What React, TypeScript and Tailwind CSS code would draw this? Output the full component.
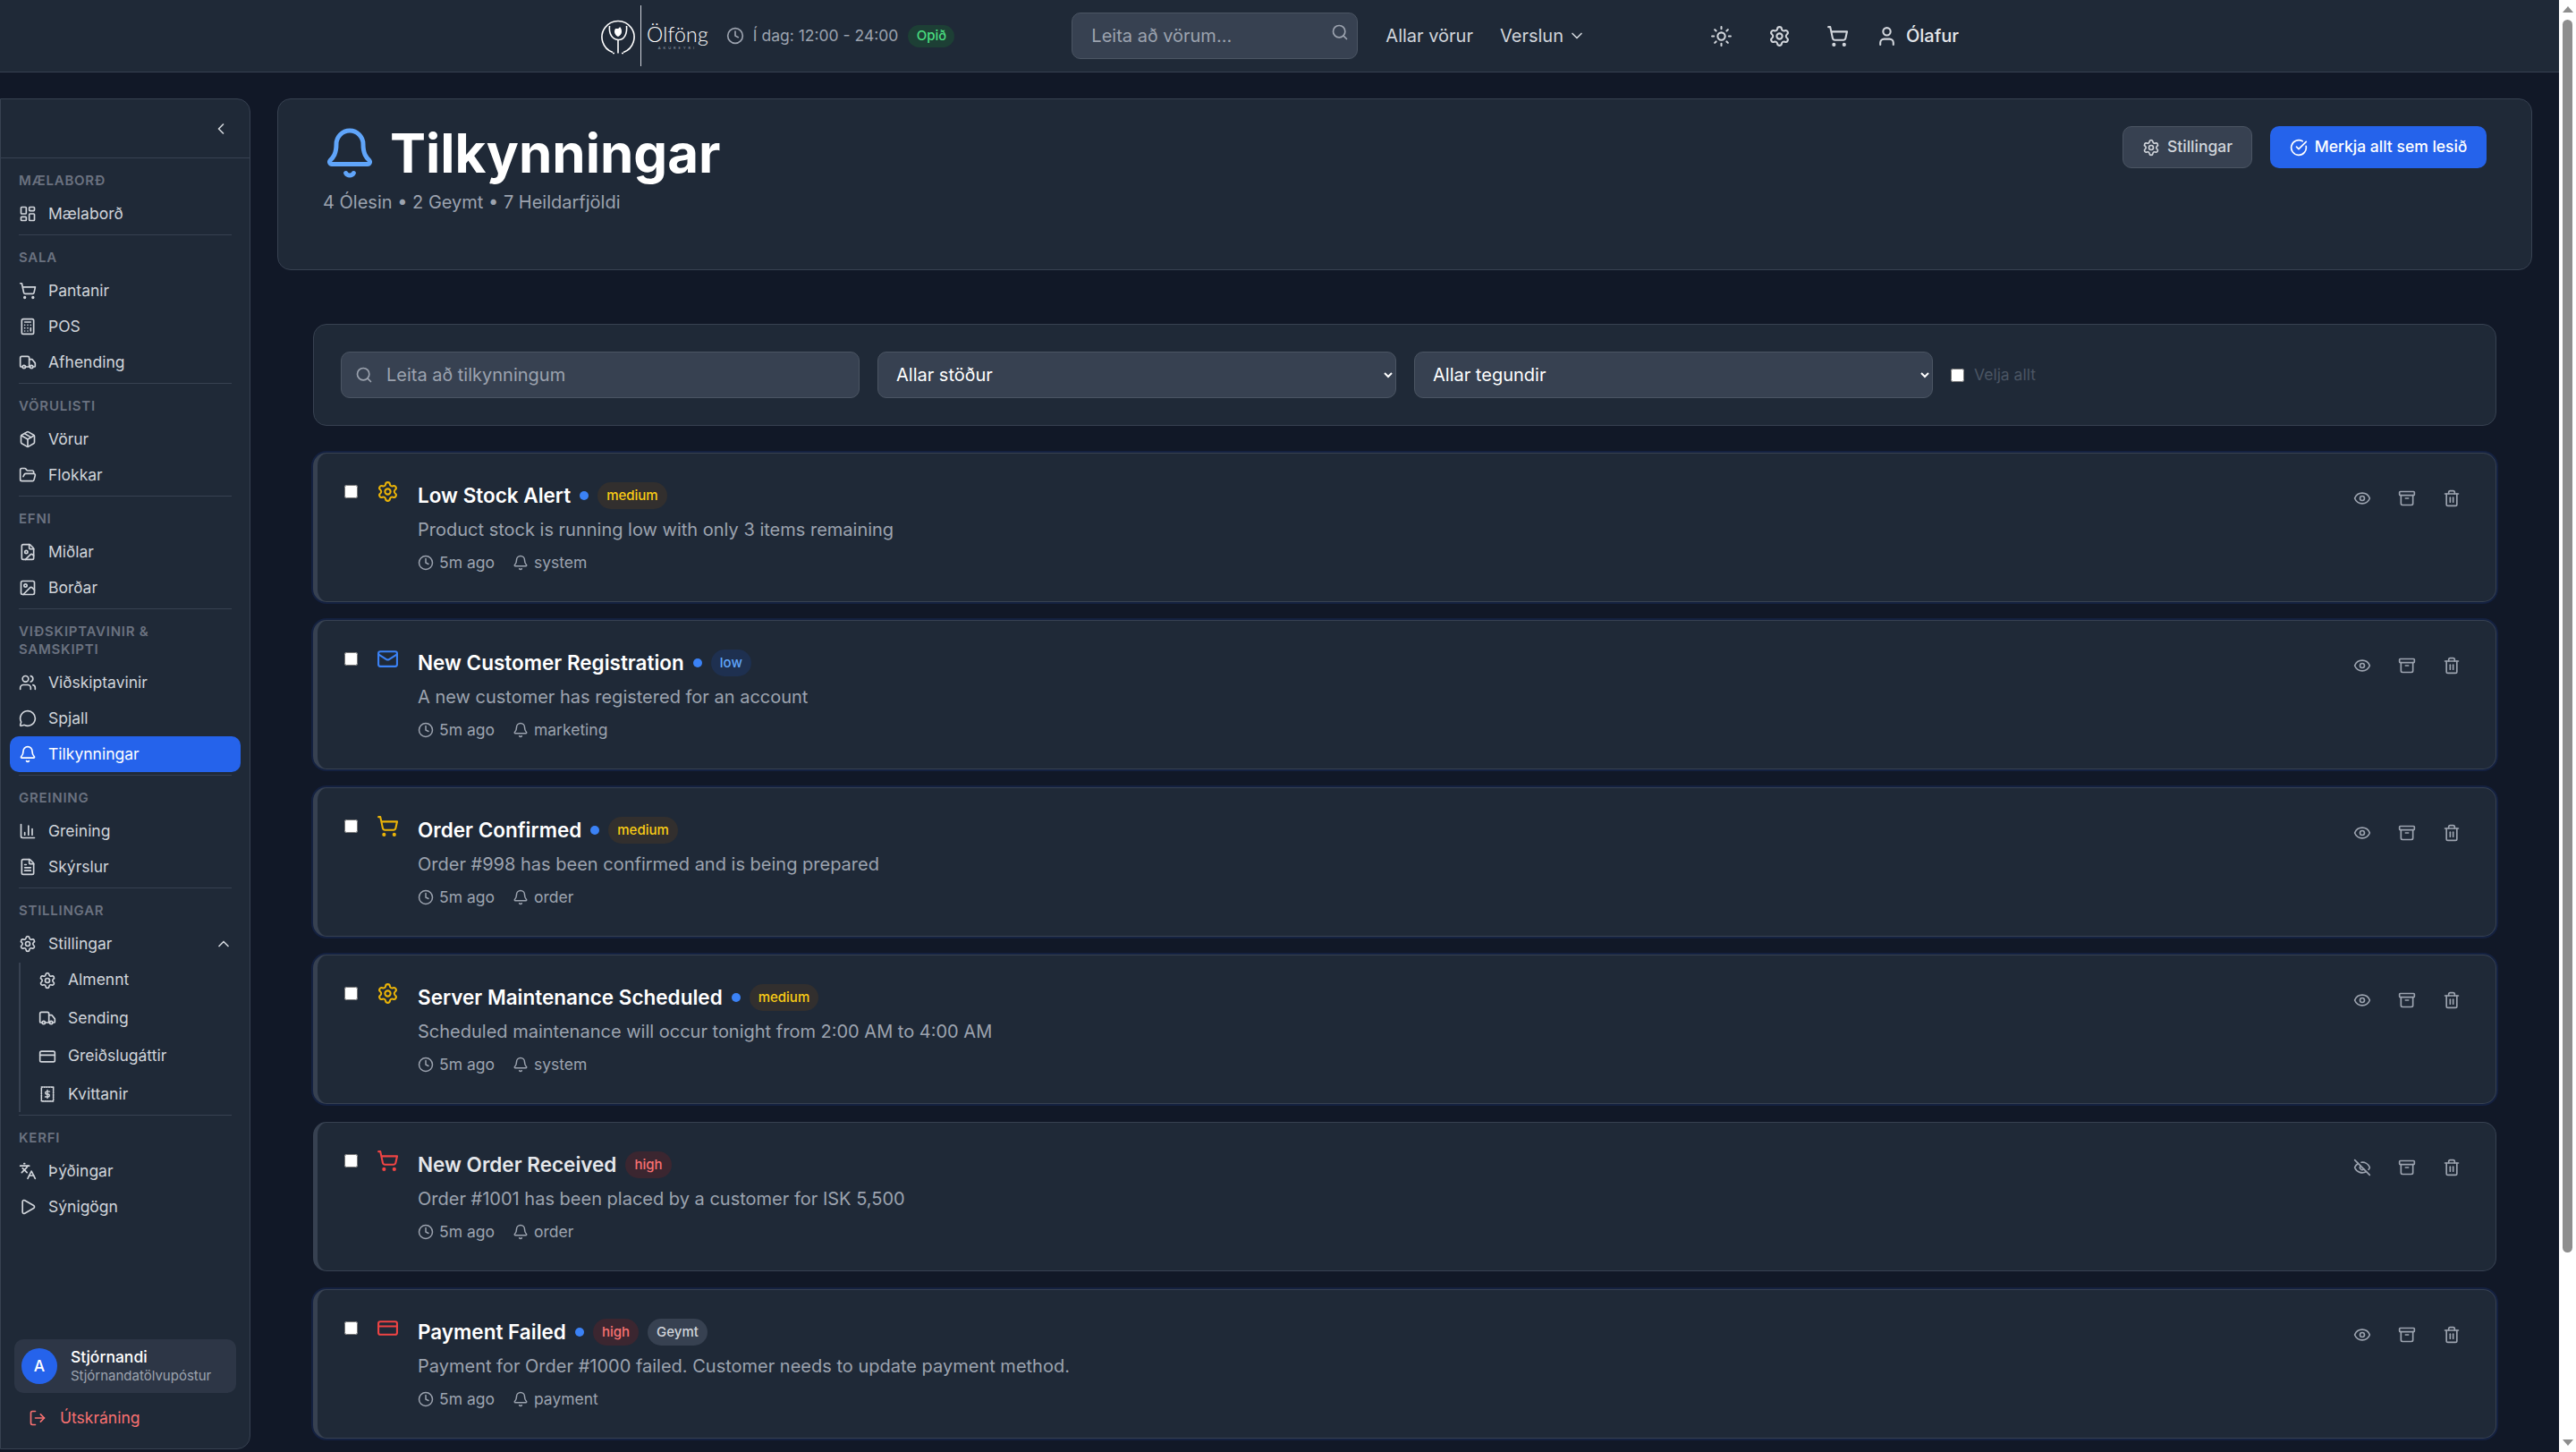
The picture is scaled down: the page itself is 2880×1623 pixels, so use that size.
import {
  Archive, Bell, Calculator, ChartColumn, ChevronDown, ChevronLeft, ChevronUp, CircleCheckBig, Clock, CreditCard,
  Eye, EyeOff, FileImage, FileText, FolderOpen, Image, Languages, LayoutDashboard, LogOut, Mail, MessageCircle,
  Package, Play, Search, Settings, ShoppingCart, Sun, Trash2, Truck, User, Users,
} from 'lucide-react';
import type { ComponentType, ReactNode } from 'react';

type IconType = ComponentType<{ className?: string; size?: number }>;

function ReceiptIcon({ className }: { className?: string }) {
  return (
    <svg viewBox="0 0 24 24" fill="none" stroke="currentColor" strokeWidth="2" strokeLinecap="round" className={className}>
      <rect x="4" y="2.5" width="16" height="19" strokeDasharray="1.6 1.6" />
      <path d="M12 6.5v11M15 8.5h-4a1.7 1.7 0 0 0 0 3.5h2a1.7 1.7 0 0 1 0 3.5H9" strokeWidth="1.7" />
    </svg>
  );
}

function Logo() {
  return (
    <div className="flex items-center">
      <svg viewBox="0 0 40 52" className="w-[40px] h-[52px] text-white" fill="none" stroke="currentColor">
        <path d="M14 44.5A18 18 0 1 1 26 44.5" strokeWidth="1.6" />
        <path d="M10.5 15c-1 9 3 15 9.500 15.500s10.500-6.500 9.500-15.500" strokeWidth="1.6" />
        <path d="M20 30.500v15M14 45.500h2M24 45.500h2" strokeWidth="1.6" />
        <path d="M20 27c-4-2-5-6-3-9 2 0 4 .5 5-2 3 3 3 9-2 11z" fill="currentColor" stroke="none" />
      </svg>
      <div className="w-px h-[68px] bg-[#d1d5db] ml-[5px] mr-[6px]" />
      <div className="flex flex-col items-center">
        <span className="font-['Lato'] font-light text-[23px] leading-[26px] text-white tracking-[0.2px]">Ölföng</span>
        <span className="font-['Lato'] text-[4px] leading-[5px] tracking-[3px] text-[#9ca3af]">AKUREYRI</span>
      </div>
    </div>
  );
}

function TopBar() {
  return (
    <header className="h-[81px] shrink-0 bg-[#1f2937] border-b border-[#374151] flex items-center pl-[671px]">
      <Logo />
      <Clock className="w-[20px] h-[20px] text-[#9ca3af] ml-[20px]" />
      <span className="ml-[10px] text-[17.5px] text-[#9ca3af] whitespace-nowrap">Í dag: 12:00 - 24:00</span>
      <span className="ml-[11px] h-[25px] w-[52px] rounded-full bg-[#1d3f35] text-[#4ade80] text-[15px] font-medium flex items-center justify-center">Opið</span>
      <div className="relative ml-[131px] w-[320px] h-[52px] shrink-0">
        <input
          placeholder="Leita að vörum..."
          className="w-full h-full rounded-[10px] bg-[#374151] border border-[#4b5563] pl-[21px] text-[20px] text-white placeholder:text-[#9ca3af] outline-none"
        />
        <Search className="absolute right-[10px] top-[12px] w-[20px] h-[20px] text-[#9ca3af]" />
      </div>
      <span className="ml-[31px] text-[20px] text-[#d1d5db] whitespace-nowrap">Allar vörur</span>
      <span className="ml-[30px] text-[20px] text-[#d1d5db]">Verslun</span>
      <ChevronDown className="ml-[5px] w-[20px] h-[20px] text-[#d1d5db]" />
      <Sun className="ml-[139px] w-[25px] h-[25px] text-[#d1d5db]" />
      <Settings className="ml-[40px] w-[25px] h-[25px] text-[#d1d5db]" />
      <ShoppingCart className="ml-[40px] w-[25px] h-[25px] text-[#d1d5db]" />
      <User className="ml-[30px] w-[25px] h-[25px] text-[#d1d5db]" />
      <span className="ml-[9px] text-[20px] font-medium text-[#e5e7eb]">Ólafur</span>
    </header>
  );
}

const navSections: { label: ReactNode; items: { name: string; icon: IconType; active?: boolean }[] }[] = [
  { label: 'Mælaborð', items: [{ name: 'Mælaborð', icon: LayoutDashboard }] },
  { label: 'Sala', items: [{ name: 'Pantanir', icon: ShoppingCart }, { name: 'POS', icon: Calculator }, { name: 'Afhending', icon: Truck }] },
  { label: 'Vörulisti', items: [{ name: 'Vörur', icon: Package }, { name: 'Flokkar', icon: FolderOpen }] },
  { label: 'Efni', items: [{ name: 'Miðlar', icon: FileImage }, { name: 'Borðar', icon: Image }] },
  {
    label: 'Viðskiptavinir & samskipti',
    items: [{ name: 'Viðskiptavinir', icon: Users }, { name: 'Spjall', icon: MessageCircle }, { name: 'Tilkynningar', icon: Bell, active: true }],
  },
  { label: 'Greining', items: [{ name: 'Greining', icon: ChartColumn }, { name: 'Skýrslur', icon: FileText }] },
];

const settingsChildren: { name: string; icon: IconType }[] = [
  { name: 'Almennt', icon: Settings },
  { name: 'Sending', icon: Truck },
  { name: 'Greiðslugáttir', icon: CreditCard },
  { name: 'Kvittanir', icon: ReceiptIcon },
];

function SectionLabel({ children }: { children: ReactNode }) {
  return <div className="px-[10px] mb-[7px] text-[15px] leading-[20px] font-semibold uppercase tracking-[0.75px] text-[#6b7280]">{children}</div>;
}

function NavItem({ name, icon: Icon, active }: { name: string; icon: IconType; active?: boolean }) {
  return (
    <div className={`h-[40px] flex items-center gap-[13px] px-[10px] rounded-[10px] text-[17.5px] ${active ? 'bg-[#2563eb] text-white' : 'text-[#d1d5db]'}`}>
      <Icon className="w-[20px] h-[20px] shrink-0" />
      <span>{name}</span>
    </div>
  );
}

function Sidebar() {
  return (
    <aside className="w-[280px] h-[1510px] shrink-0 mt-[29px] bg-[#1f2937] border border-[#374151] rounded-r-[15px] flex flex-col">
      <div className="h-[66px] shrink-0 border-b border-[#374151] flex items-center justify-end pr-[22px]">
        <ChevronLeft className="w-[20px] h-[20px] text-[#d1d5db]" />
      </div>
      <nav className="flex-1 px-[10px] pt-[15px]">
        {navSections.map((section, i) => (
          <div key={i} className="mb-[15px]">
            <SectionLabel>{section.label}</SectionLabel>
            {section.items.map((item) => (
              <NavItem key={item.name} {...item} />
            ))}
            <div className="mx-[10px] mt-[3px] border-b border-[#374151]" />
          </div>
        ))}
        <div className="mb-[15px]">
          <SectionLabel>Stillingar</SectionLabel>
          <div className="h-[40px] flex items-center gap-[13px] pl-[10px] pr-[9px] text-[17.5px] text-[#d1d5db]">
            <Settings className="w-[20px] h-[20px] shrink-0" />
            <span className="flex-1">Stillingar</span>
            <ChevronUp className="w-[20px] h-[20px]" />
          </div>
          <div className="ml-[10px] mt-px pl-[20px] border-l-2 border-[#374151] h-[167px] flex flex-col gap-[5.5px] pt-[1px]">
            {settingsChildren.map(({ name, icon: Icon }) => (
              <div key={name} className="h-[37px] flex items-center gap-[13px] text-[17.5px] text-[#d1d5db]">
                <Icon className="w-[20px] h-[20px] shrink-0" />
                <span>{name}</span>
              </div>
            ))}
          </div>
          <div className="mx-[10px] mt-[3px] border-b border-[#374151]" />
        </div>
        <div>
          <SectionLabel>Kerfi</SectionLabel>
          <NavItem name="Þýðingar" icon={Languages} />
          <NavItem name="Sýnigögn" icon={Play} />
        </div>
      </nav>
      <div className="mx-[15px] h-[60px] rounded-[10px] bg-[#2d3646] flex items-center pl-[8px] gap-[15px]">
        <div className="w-[40px] h-[40px] rounded-full bg-[#2563eb] flex items-center justify-center text-white text-[17.5px] font-medium">A</div>
        <div>
          <div className="text-[17.5px] leading-[22px] font-medium text-white">Stjórnandi</div>
          <div className="text-[15px] leading-[20px] text-[#9ca3af]">Stjórnandatölvupóstur</div>
        </div>
      </div>
      <div className="mt-[8px] mb-[14px] h-[40px] pl-[31px] flex items-center gap-[15px] text-[17.5px] text-[#f87171]">
        <LogOut className="w-[20px] h-[20px]" />
        <span>Útskráning</span>
      </div>
    </aside>
  );
}

function PageHead() {
  return (
    <div className="h-[192px] shrink-0 bg-[#1f2937] border border-[#374151] rounded-[15px] pl-[50px] pr-[50px] pt-[30px] flex justify-between">
      <div>
        <div className="flex items-center gap-[15px] h-[60px]">
          <Bell className="w-[60px] h-[60px] text-[#60a5fa]" />
          <h1 className="text-[60px] leading-[60px] font-bold text-white">Tilkynningar</h1>
        </div>
        <p className="mt-[10px] text-[20px] leading-[30px] text-[#9ca3af]">4 Ólesin • 2 Geymt • 7 Heildarfjöldi</p>
      </div>
      <div className="flex gap-[20px] h-[47px]">
        <button className="w-[145px] rounded-[10px] bg-[#374151] border border-[#4b5563] text-[#d1d5db] text-[17.5px] font-medium flex items-center justify-center gap-[8px]">
          <Settings className="w-[20px] h-[20px]" />
          Stillingar
        </button>
        <button className="w-[242px] rounded-[10px] bg-[#2563eb] text-white text-[17.5px] font-medium flex items-center justify-center gap-[8px]">
          <CircleCheckBig className="w-[20px] h-[20px]" />
          Merkja allt sem lesið
        </button>
      </div>
    </div>
  );
}

function Filters() {
  const selectClass = 'w-[580px] h-[52px] rounded-[10px] bg-[#374151] border border-[#4b5563] px-[16px] text-[20px] text-white outline-none';
  return (
    <div className="h-[114px] shrink-0 bg-[#1f2937] border border-[#374151] rounded-[15px] px-[30px] flex items-center gap-[20px]">
      <div className="relative w-[580px] h-[52px]">
        <Search className="absolute left-[16px] top-[16px] w-[20px] h-[20px] text-[#9ca3af]" />
        <input
          placeholder="Leita að tilkynningum"
          className="w-full h-full rounded-[10px] bg-[#374151] border border-[#4b5563] pl-[50px] text-[20px] text-white placeholder:text-[#9ca3af] outline-none"
        />
      </div>
      <select className={selectClass} defaultValue="all">
        <option value="all">Allar stöður</option>
      </select>
      <select className={selectClass} defaultValue="all">
        <option value="all">Allar tegundir</option>
      </select>
      <label className="flex items-center gap-[11px] text-[17.5px] text-[#4b5563]">
        <input type="checkbox" className="w-[15px] h-[15px]" />
        Velja allt
      </label>
    </div>
  );
}

type Priority = 'low' | 'medium' | 'high';

const priorityBadge: Record<Priority, string> = {
  low: 'bg-[#1e3050] text-[#60a5fa]',
  medium: 'bg-[#322f2e] text-[#facc15]',
  high: 'bg-[#3b2630] text-[#f87171]',
};

const priorityIcon: Record<Priority, string> = {
  low: 'text-[#3b82f6]',
  medium: 'text-[#eab308]',
  high: 'text-[#ef4444]',
};

const notifications: {
  title: string; body: string; type: string; priority: Priority; icon: IconType; unread: boolean; archived?: boolean;
}[] = [
  { title: 'Low Stock Alert', body: 'Product stock is running low with only 3 items remaining', type: 'system', priority: 'medium', icon: Settings, unread: true },
  { title: 'New Customer Registration', body: 'A new customer has registered for an account', type: 'marketing', priority: 'low', icon: Mail, unread: true },
  { title: 'Order Confirmed', body: 'Order #998 has been confirmed and is being prepared', type: 'order', priority: 'medium', icon: ShoppingCart, unread: true },
  { title: 'Server Maintenance Scheduled', body: 'Scheduled maintenance will occur tonight from 2:00 AM to 4:00 AM', type: 'system', priority: 'medium', icon: Settings, unread: true },
  { title: 'New Order Received', body: 'Order #1001 has been placed by a customer for ISK 5,500', type: 'order', priority: 'high', icon: ShoppingCart, unread: false },
  { title: 'Payment Failed', body: 'Payment for Order #1000 failed. Customer needs to update payment method.', type: 'payment', priority: 'high', icon: CreditCard, unread: true, archived: true },
];

function NotificationCard({ n }: { n: (typeof notifications)[number] }) {
  const Icon = n.icon;
  const SeenIcon = n.unread ? Eye : EyeOff;
  return (
    <div className={`h-[167px] shrink-0 bg-[#1f2937] border border-[#374151] border-l-[5px] rounded-[15px] pl-[30px] pr-[29px] pt-[30px] flex ${n.unread ? 'shadow-[0_0_0_2px_rgba(30,58,138,0.25)]' : ''}`}>
      <input type="checkbox" className="w-[15px] h-[15px] mt-[5px] mr-[21px] shrink-0" />
      <Icon className={`w-[25px] h-[25px] shrink-0 mr-[21px] ${priorityIcon[n.priority]}`} />
      <div className="flex-1">
        <div className="flex items-center h-[30px] mt-[2px]">
          <h3 className={`text-[22.5px] font-semibold ${n.unread ? 'text-white' : 'text-[#e5e7eb]'}`}>{n.title}</h3>
          {n.unread && <span className="ml-[10px] w-[10px] h-[10px] rounded-full bg-[#3b82f6]" />}
          <span className={`ml-[10px] h-[30px] px-[10px] rounded-full text-[15px] font-medium flex items-center ${priorityBadge[n.priority]}`}>{n.priority}</span>
          {n.archived && <span className="ml-[10px] h-[30px] px-[10px] rounded-full bg-[#374151] text-[#d1d5db] text-[15px] font-medium flex items-center">Geymt</span>}
        </div>
        <p className="mt-[8px] text-[20px] leading-[30px] text-[#9ca3af]">{n.body}</p>
        <div className="mt-[9px] flex items-center text-[17.5px] leading-[25px] text-[#9ca3af]">
          <Clock className="w-[18px] h-[18px] mr-[6px]" />
          <span>5m ago</span>
          <Bell className="w-[18px] h-[18px] ml-[20px] mr-[6px]" />
          <span>{n.type}</span>
        </div>
      </div>
      <div className="flex gap-[10px] h-[40px] text-[#9ca3af]">
        {[SeenIcon, Archive, Trash2].map((ActionIcon, i) => (
          <button key={i} className="w-[40px] h-[40px] flex items-center justify-center">
            <ActionIcon className="w-[20px] h-[20px]" />
          </button>
        ))}
      </div>
    </div>
  );
}

function FakeScrollbar() {
  return (
    <div className="w-[19px] shrink-0 bg-white flex flex-col items-center py-[7px]">
      <div className="w-0 h-0 border-x-[6px] border-x-transparent border-b-[7px] border-b-[#8e8e8e]" />
      <div className="mt-[8px] w-[11px] h-[1378px] rounded-full bg-[#8e8e8e]" />
      <div className="mt-auto w-0 h-0 border-x-[6px] border-x-transparent border-t-[7px] border-t-[#8e8e8e]" />
    </div>
  );
}

export default function App() {
  return (
    <div className="w-[2880px] h-[1623px] flex overflow-hidden bg-[#111827] font-['Inter',sans-serif]">
      <div className="w-[2861px] shrink-0 flex flex-col">
        <TopBar />
        <div className="flex flex-1 min-h-0">
          <Sidebar />
          <main className="flex-1 min-w-0 pt-[29px] pl-[30px] pr-[30px]">
            <PageHead />
            <div className="mt-[60px] ml-[40px] mr-[40px] flex flex-col gap-[20px]">
              <div className="mb-[10px]"><Filters /></div>
              {notifications.map((n) => (
                <NotificationCard key={n.title} n={n} />
              ))}
            </div>
          </main>
        </div>
      </div>
      <FakeScrollbar />
    </div>
  );
}
